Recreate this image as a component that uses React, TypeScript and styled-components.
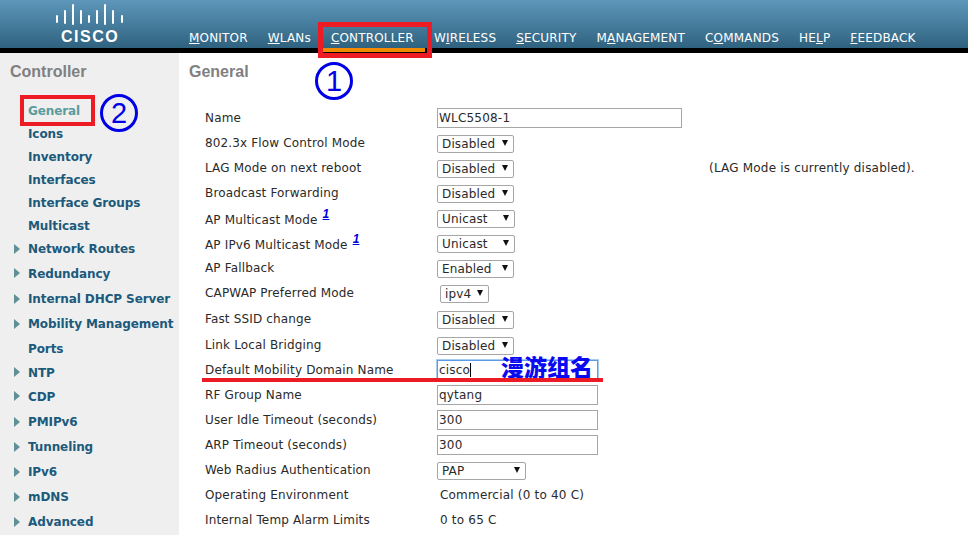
import React from 'react'
import styled, { createGlobalStyle } from 'styled-components'

const GlobalStyle = createGlobalStyle`
  html, body {
    margin: 0;
    padding: 0;
    background: #fff;
  }
  body {
    font-family: 'DejaVu Sans', Verdana, sans-serif;
    font-size: 12px;
    color: #2a2a2a;
  }
`

const Page = styled.div`
  position: relative;
  width: 968px;
  height: 535px;
  overflow: hidden;
`

const Header = styled.header`
  display: flex;
  height: 48px;
  border-bottom: 5px solid #000;
  background: linear-gradient(#5e97bb, #2f627f);
`

const Brand = styled.div`
  width: 189px;
  position: relative;
  flex: none;
`

const LogoMark = styled.svg`
  position: absolute;
  left: 56px;
  top: 4px;
`

const LogoWord = styled.span`
  position: absolute;
  left: 61px;
  top: 27px;
  font-family: 'Liberation Sans', Arial, sans-serif;
  font-size: 16px;
  line-height: 19px;
  font-weight: 700;
  letter-spacing: 1.5px;
  color: #fff;
`

const Nav = styled.nav`
  display: flex;
  gap: 20px;
  padding-top: 31px;
`

const NavItem = styled.a`
  color: #fff;
  font-size: 12px;
  line-height: 15px;
  letter-spacing: 0.18px;
  white-space: nowrap;
  text-decoration: none;
`

const Body = styled.div`
  display: flex;
  height: 482px;
`

const Sidebar = styled.aside`
  width: 179px;
  flex: none;
  background: #efefef;
`

const SideTitle = styled.h2`
  margin: 0;
  padding: 10px 0 0 10px;
  height: 38px;
  box-sizing: border-box;
  font-family: 'Liberation Sans', Arial, sans-serif;
  font-size: 16px;
  line-height: 18px;
  font-weight: 700;
  color: #808080;
`

const SideList = styled.ul`
  list-style: none;
  margin: 0;
  padding: 9px 0 0;
`

const SideItem = styled.li<{ $h: number }>`
  position: relative;
  height: ${({ $h }) => $h}px;
  line-height: ${({ $h }) => $h}px;
  padding-left: 28px;
  font-size: 12px;
  font-weight: 700;
  letter-spacing: -0.1px;
  white-space: nowrap;
  color: #1c5a7c;
  &.active {
    color: #5b9c9e;
  }
`

const Arrow = styled.i`
  position: absolute;
  left: 14px;
  top: calc(50% - 6px);
  width: 0;
  height: 0;
  border-left: 6px solid #5f9095;
  border-top: 5px solid transparent;
  border-bottom: 5px solid transparent;
`

const Main = styled.main`
  flex: 1;
  padding-left: 10px;
`

const Title = styled.h1`
  margin: 0;
  padding-top: 10px;
  height: 52px;
  box-sizing: border-box;
  font-family: 'Liberation Sans', Arial, sans-serif;
  font-size: 16px;
  line-height: 18px;
  font-weight: 700;
  color: #808080;
`

const Rows = styled.div`
  padding-left: 16px;
`

const Row = styled.div<{ $h: number }>`
  display: grid;
  grid-template-columns: 232px 272px 1fr;
  align-items: center;
  height: ${({ $h }) => $h}px;
`

const Label = styled.div<{ $drop?: boolean }>`
  padding-top: ${({ $drop }) => ($drop ? 5 : 0)}px;
  font-size: 12px;
  letter-spacing: 0.15px;
  white-space: nowrap;
`

const Cell = styled.div<{ $indent?: number }>`
  padding-left: ${({ $indent }) => $indent ?? 0}px;
  display: flex;
  align-items: center;
`

const Note = styled.div`
  font-size: 12px;
  letter-spacing: 0.2px;
  white-space: nowrap;
`

const Foot = styled.a`
  position: relative;
  top: -6px;
  margin-left: 4px;
  font-family: 'Liberation Sans', Arial, sans-serif;
  font-size: 12px;
  font-weight: 700;
  font-style: italic;
  color: #0000dd;
  text-decoration: underline;
  padding: 0 1px;
`

const Input = styled.div<{ $w: number; $focus?: boolean }>`
  width: ${({ $w }) => $w}px;
  height: 20px;
  box-sizing: border-box;
  border: 1px solid ${({ $focus }) => ($focus ? '#5b9be6' : '#a6a6a6')};
  box-shadow: ${({ $focus }) => ($focus ? '0 0 0 1px #a9cdf2' : 'none')};
  padding-left: 1px;
  font-size: 12px;
  letter-spacing: 0.2px;
  line-height: 18px;
  background: #fff;
`

const Caret = styled.span`
  display: inline-block;
  width: 1px;
  height: 14px;
  vertical-align: -3px;
  background: #000;
`

const Select = styled.div<{ $w: number }>`
  position: relative;
  top: 1px;
  width: ${({ $w }) => $w}px;
  height: 18px;
  box-sizing: border-box;
  border: 1px solid #a6a6a6;
  border-radius: 2px;
  padding-left: 4px;
  font-size: 12px;
  letter-spacing: 0.15px;
  line-height: 17px;
  background: #fff;
  &::after {
    content: '';
    position: absolute;
    right: 5px;
    top: 4px;
    border-top: 6px solid #111;
    border-left: 3.5px solid transparent;
    border-right: 3.5px solid transparent;
  }
`

const Plain = styled.span`
  padding-left: 3px;
  font-size: 12px;
  letter-spacing: 0.2px;
`

// annotations drawn on top of the page
const RedBox = styled.div`
  position: absolute;
  box-sizing: border-box;
  border: 5px solid #ed1c24;
  left: 318px;
  top: 22px;
  width: 114px;
  height: 36px;
`

const RedBoxSmall = styled.div`
  position: absolute;
  box-sizing: border-box;
  border: 4px solid #ed1c24;
  left: 20px;
  top: 95px;
  width: 75px;
  height: 31px;
`

const OrangeBar = styled.div`
  position: absolute;
  left: 323px;
  top: 48px;
  width: 102px;
  height: 4px;
  background: #f28a00;
`

const Badge = styled.span<{ $x: number; $y: number }>`
  position: absolute;
  left: ${({ $x }) => $x}px;
  top: ${({ $y }) => $y}px;
  width: 38px;
  height: 38px;
  box-sizing: border-box;
  border: 3px solid #0000e6;
  border-radius: 50%;
  display: flex;
  align-items: center;
  justify-content: center;
  font-family: 'Liberation Sans', Arial, sans-serif;
  font-size: 29px;
  line-height: 32px;
  color: #0000e6;
`

const Underline = styled.div`
  position: absolute;
  left: 202px;
  top: 378px;
  width: 401px;
  height: 4px;
  background: #ed1c24;
`

const Callout = styled.span`
  position: absolute;
  left: 501px;
  top: 351px;
  font-family: 'Noto Sans CJK SC', sans-serif;
  font-size: 23px;
  line-height: 30px;
  font-weight: 900;
  color: #0a0af0;
  white-space: nowrap;
`

const navItems: [string, string, string][] = [
  ['', 'M', 'ONITOR'],
  ['', 'W', 'LANs'],
  ['', 'C', 'ONTROLLER'],
  ['W', 'I', 'RELESS'],
  ['', 'S', 'ECURITY'],
  ['M', 'A', 'NAGEMENT'],
  ['C', 'O', 'MMANDS'],
  ['HE', 'L', 'P'],
  ['', 'F', 'EEDBACK'],
]

const sideItems: { name: string; h: number; arrow?: boolean }[] = [
  { name: 'General', h: 23 },
  { name: 'Icons', h: 23 },
  { name: 'Inventory', h: 23 },
  { name: 'Interfaces', h: 23 },
  { name: 'Interface Groups', h: 23 },
  { name: 'Multicast', h: 23 },
  { name: 'Network Routes', h: 23, arrow: true },
  { name: 'Redundancy', h: 26, arrow: true },
  { name: 'Internal DHCP Server', h: 25, arrow: true },
  { name: 'Mobility Management', h: 25, arrow: true },
  { name: 'Ports', h: 25 },
  { name: 'NTP', h: 22, arrow: true },
  { name: 'CDP', h: 26, arrow: true },
  { name: 'PMIPv6', h: 25, arrow: true },
  { name: 'Tunneling', h: 25, arrow: true },
  { name: 'IPv6', h: 25, arrow: true },
  { name: 'mDNS', h: 25, arrow: true },
  { name: 'Advanced', h: 25, arrow: true },
]

function LogoBars() {
  // x, top, bottom of every bar in the mark
  const bars = [
    [1, 12, 18],
    [9, 7, 19],
    [17, 1, 20],
    [25, 7, 19],
    [33, 12, 18],
    [41, 7, 19],
    [49, 1, 20],
    [57, 7, 19],
    [66, 12, 18],
  ]
  return (
    <LogoMark width="68" height="22" viewBox="0 0 68 22">
      {bars.map(([x, top, bottom]) => (
        <line key={x} x1={x} x2={x} y1={top} y2={bottom} stroke="#fff" strokeWidth="2" strokeLinecap="round" />
      ))}
    </LogoMark>
  )
}

export default function App() {
  return (
    <Page>
      <GlobalStyle />
      <Header>
        <Brand>
          <LogoBars />
          <LogoWord>CISCO</LogoWord>
        </Brand>
        <Nav>
          {navItems.map(([pre, key, post]) => (
            <NavItem key={pre + key + post}>
              {pre}
              <u>{key}</u>
              {post}
            </NavItem>
          ))}
        </Nav>
      </Header>
      <Body>
        <Sidebar>
          <SideTitle>Controller</SideTitle>
          <SideList>
            {sideItems.map(item => (
              <SideItem key={item.name} $h={item.h} className={item.name === 'General' ? 'active' : ''}>
                {item.arrow && <Arrow />}
                {item.name}
              </SideItem>
            ))}
          </SideList>
        </Sidebar>
        <Main>
          <Title>General</Title>
          <Rows>
            <Row $h={25}>
              <Label>Name</Label>
              <Cell><Input $w={245}>WLC5508-1</Input></Cell>
            </Row>
            <Row $h={25}>
              <Label>802.3x Flow Control Mode</Label>
              <Cell><Select $w={77}>Disabled</Select></Cell>
            </Row>
            <Row $h={25}>
              <Label>LAG Mode on next reboot</Label>
              <Cell><Select $w={77}>Disabled</Select></Cell>
              <Note>(LAG Mode is currently disabled).</Note>
            </Row>
            <Row $h={25}>
              <Label>Broadcast Forwarding</Label>
              <Cell><Select $w={77}>Disabled</Select></Cell>
            </Row>
            <Row $h={25}>
              <Label $drop>AP Multicast Mode<Foot>1</Foot></Label>
              <Cell><Select $w={78}>Unicast</Select></Cell>
            </Row>
            <Row $h={25}>
              <Label $drop>AP IPv6 Multicast Mode<Foot>1</Foot></Label>
              <Cell><Select $w={78}>Unicast</Select></Cell>
            </Row>
            <Row $h={25}>
              <Label>AP Fallback</Label>
              <Cell><Select $w={77}>Enabled</Select></Cell>
            </Row>
            <Row $h={26}>
              <Label>CAPWAP Preferred Mode</Label>
              <Cell $indent={3}><Select $w={49}>ipv4</Select></Cell>
            </Row>
            <Row $h={26}>
              <Label>Fast SSID change</Label>
              <Cell><Select $w={77}>Disabled</Select></Cell>
            </Row>
            <Row $h={25}>
              <Label>Link Local Bridging</Label>
              <Cell><Select $w={77}>Disabled</Select></Cell>
            </Row>
            <Row $h={25}>
              <Label>Default Mobility Domain Name</Label>
              <Cell><Input $w={161} $focus>cisco<Caret /></Input></Cell>
            </Row>
            <Row $h={25}>
              <Label>RF Group Name</Label>
              <Cell><Input $w={161}>qytang</Input></Cell>
            </Row>
            <Row $h={25}>
              <Label>User Idle Timeout (seconds)</Label>
              <Cell><Input $w={161}>300</Input></Cell>
            </Row>
            <Row $h={25}>
              <Label>ARP Timeout (seconds)</Label>
              <Cell><Input $w={161}>300</Input></Cell>
            </Row>
            <Row $h={25}>
              <Label>Web Radius Authentication</Label>
              <Cell><Select $w={89}>PAP</Select></Cell>
            </Row>
            <Row $h={25}>
              <Label>Operating Environment</Label>
              <Cell><Plain>Commercial (0 to 40 C)</Plain></Cell>
            </Row>
            <Row $h={25}>
              <Label>Internal Temp Alarm Limits</Label>
              <Cell><Plain>0 to 65 C</Plain></Cell>
            </Row>
          </Rows>
        </Main>
      </Body>
      <OrangeBar />
      <RedBox />
      <RedBoxSmall />
      <Badge $x={315} $y={62}>1</Badge>
      <Badge $x={100} $y={94}>2</Badge>
      <Callout>漫游组名</Callout>
      <Underline />
    </Page>
  )
}
